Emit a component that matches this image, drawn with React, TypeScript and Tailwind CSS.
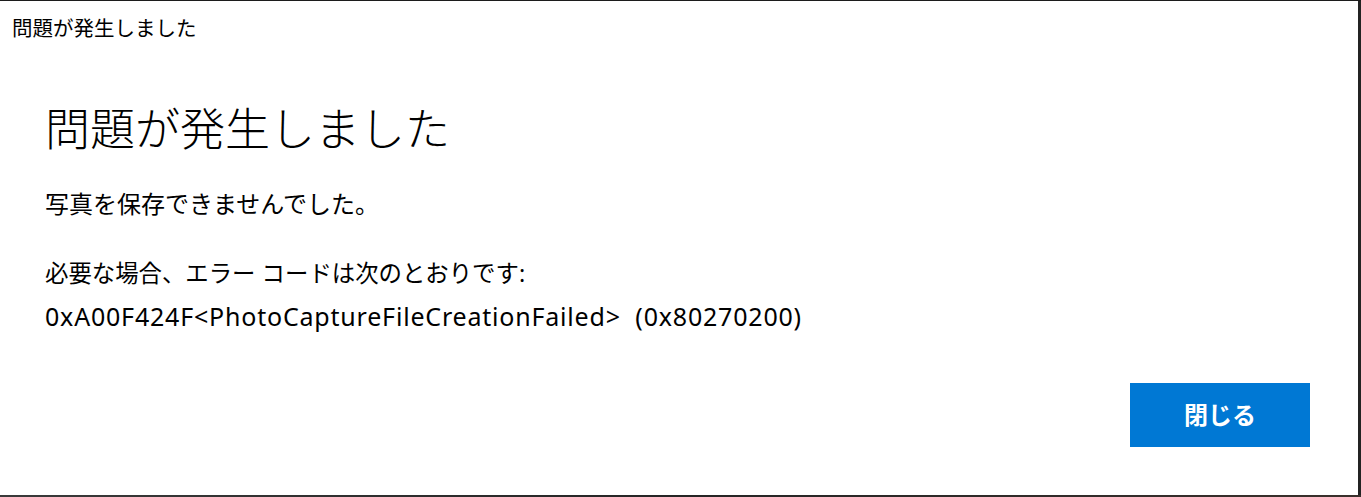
import React from 'react';

const jp = "font-['Noto_Sans','Noto_Sans_CJK_JP',sans-serif]";

const App: React.FC = () => {
  return (
    <div className="w-[1361px] h-[497px] bg-[#2b2b2b] flex flex-col">
      <div className="h-[1px] bg-[#1c1c1c]" />
      <div className="flex h-[494px]">
        <div className={`w-[1358px] h-full bg-white flex flex-col text-black ${jp}`}>
          <div className="pl-[12px] pt-[13px] text-[20.5px] leading-[28px]">問題が発生しました</div>

          <div className="pl-[45px]">
            <h1 className="mt-[59px] text-[45px] leading-[56px] font-light">問題が発生しました</h1>
            <p className="mt-[29px] text-[24px] leading-[36px]">写真を保存できませんでした。</p>
            <div className="mt-[30px] leading-[43px]">
              <p className="text-[23.4px]">必要な場合、エラー コードは次のとおりです:</p>
              <p className="text-[25px] tracking-[0.8px]">
                0xA00F424F&lt;PhotoCaptureFileCreationFailed&gt;&nbsp; (0x80270200)
              </p>
            </div>
          </div>

          <div className="flex-1 flex items-end justify-end pr-[48px] pb-[48px]">
            <button className="w-[180px] h-[64px] bg-[#0078d4] text-white text-[24px] font-bold">
              閉じる
            </button>
          </div>
        </div>
        <div className="flex-1 bg-[#232323]" />
      </div>
      <div className="flex-1 bg-gradient-to-r from-[#3a3a3a] via-[#252525] to-[#3a302c]" />
    </div>
  );
};

export default App;
